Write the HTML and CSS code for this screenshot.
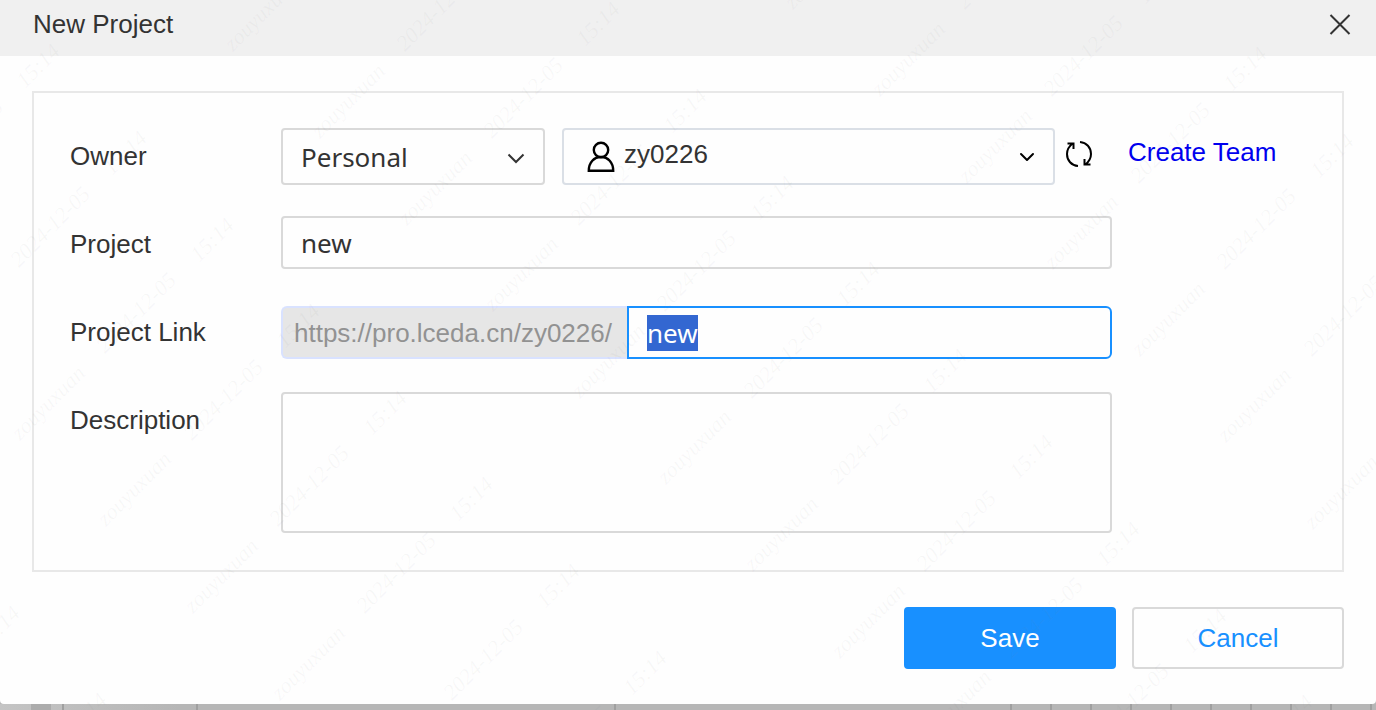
FILE: index.html
```html
<!DOCTYPE html>
<html lang="en">
<head>
<meta charset="utf-8">
<title>New Project</title>
<link rel="stylesheet" href="styles.css">
</head>
<body>
<div class="dialog" role="dialog" aria-labelledby="dialog-title">
  <header class="dialog-header">
    <h1 class="dialog-title" id="dialog-title">New Project</h1>
    <button class="icon-button" type="button" aria-label="Close">
      <svg width="22" height="22" viewBox="0 0 22 22" fill="none" stroke="#333" stroke-width="2"><path d="M1.500 2 20.500 21M20.500 2 1.500 21"/></svg>
    </button>
  </header>
  <form class="dialog-body">
    <div class="panel">
      <label class="label" for="owner-type">Owner</label>
      <div class="owner">
        <div class="select-box owner-type">
          <select class="control select" id="owner-type"><option>Personal</option></select>
          <svg class="chevron" width="18" height="12" viewBox="0 0 18 12" fill="none" stroke="#333" stroke-width="2"><path d="M1.500 2.500 9 10 16.500 2.500"/></svg>
        </div>
        <div class="select-box owner-name">
          <svg class="person" width="30" height="32" viewBox="0 0 30 32" fill="none" stroke="#000" stroke-width="2.400"><circle cx="14" cy="9" r="7.200"/><path d="M1.800 29.700C1.800 21.500 7 16 14 16S26.200 21.500 26.200 29.700Z"/></svg>
          <select class="control select select-name" aria-label="Owner name"><option>zy0226</option></select>
          <svg class="chevron" width="18" height="12" viewBox="0 0 18 12" fill="none" stroke="#000" stroke-width="2" stroke-linecap="round" stroke-linejoin="round"><path d="M3 2 9 8 15 2"/></svg>
        </div>
        <button class="icon-button refresh" type="button" aria-label="Refresh">
          <svg width="26" height="26" viewBox="0 0 26 26" fill="none" stroke="#000" stroke-width="2"><path d="M12 25C5.500 24.500 1 19.500 1 13 1 8.500 3.200 5 7 2.200M1.500 2.500H7.500V8M14 1C20.500 1.500 25 6.500 25 13 25 17.500 22.800 21 19 23.800M24.500 23.500H18.500V18"/></svg>
        </button>
      </div>
      <a class="create-team" href="#">Create Team</a>

      <label class="label" for="project">Project</label>
      <input class="control" id="project" type="text" value="new">

      <label class="label" for="link">Project Link</label>
      <div class="link-group">
        <span class="link-prefix">https://pro.lceda.cn/zy0226/</span>
        <input class="control link-input" id="link" type="text" value="new">
      </div>

      <label class="label" for="description">Description</label>
      <textarea class="control description" id="description"></textarea>
    </div>
    <footer class="actions">
      <button class="button primary" type="submit">Save</button>
      <button class="button" type="button">Cancel</button>
    </footer>
  </form>
</div>
<div class="backdrop"><i class="tab"></i><i></i><i></i><i></i><i></i><i></i><i></i><i></i><i></i><i></i><i></i><i></i><i></i></div>
<svg class="watermark" aria-hidden="true">
  <defs>
    <g id="mark">
      <text transform="translate(8 2) rotate(-45)">zouyuxuan</text>
      <text transform="translate(180 2) rotate(-45)">2024-12-05</text>
      <text transform="translate(360 -3) rotate(-45)">15:14</text>
    </g>
    <g id="run">
      <use href="#mark" x="-348" y="-348"/><use href="#mark" x="-261" y="-261"/>
      <use href="#mark" x="-174" y="-174"/><use href="#mark" x="-87" y="-87"/>
      <use href="#mark"/><use href="#mark" x="87" y="87"/>
      <use href="#mark" x="173" y="173"/><use href="#mark" x="260" y="260"/>
      <use href="#mark" x="346" y="346"/><use href="#mark" x="433" y="433"/>
      <use href="#mark" x="520" y="520"/><use href="#mark" x="606" y="606"/>
    </g>
  </defs>
  <use href="#run" x="-808" y="221"/>
  <use href="#run" x="-248" y="179"/>
  <use href="#run" x="312" y="137"/>
  <use href="#run" x="872" y="95"/>
</svg>
<script src="app.js"></script>
</body>
</html>
```
FILE: styles.css
```css
* { box-sizing: border-box; }

body {
  margin: 0;
  min-height: 100vh;
  display: flex;
  flex-direction: column;
  overflow: hidden;
  background: #b8b8b8;
  color: #333;
  font: 26px/32px "Liberation Sans", Arial, sans-serif;
}

button, input, select, textarea { font: inherit; color: inherit; }

.dialog {
  background: #fefefe;
  border-radius: 0 0 4px 4px;
  overflow: hidden;
}

.dialog-header {
  display: flex;
  justify-content: space-between;
  align-items: center;
  height: 56px;
  padding: 0 25px 8px 33px;
  background: #f0f0f0;
}

.dialog-title { margin: 0; font-size: 26px; font-weight: 400; }

.icon-button {
  display: flex;
  padding: 0;
  border: 0;
  background: none;
}

.dialog-body { padding: 35px 32px; }

.panel {
  display: grid;
  grid-template-columns: 211px 1fr 194px;
  row-gap: 31px;
  align-items: start;
  padding: 35px 36px 37px;
  border: 2px solid #e8e8e8;
}

.label { grid-column: 1; line-height: 57px; }

.control {
  display: block;
  width: 100%;
  height: 53px;
  margin: 0;
  padding: 0 18px;
  border: 2px solid #d9d9d9;
  border-radius: 4px;
  outline: 0;
  background: transparent;
  font-family: "Noto Sans", "Open Sans", sans-serif;
}

.owner { display: flex; align-items: center; }

.select-box { position: relative; }

.select { height: 57px; appearance: none; }

.owner-type { width: 264px; margin-right: 17px; }

.owner-name { flex: 1; margin-right: 11px; }

.select-name {
  padding: 0 60px 6px;
  border-color: #dadfe6;
  font-family: "Liberation Sans", Arial, sans-serif;
}

.chevron {
  position: absolute;
  top: 24px;
  right: 20px;
  pointer-events: none;
}

.owner-name .chevron { right: 19px; }

.person { position: absolute; left: 25px; top: 13px; }

.refresh { margin: 0 20px 5px 0; }

.create-team {
  padding-left: 16px;
  color: #0000ee;
  line-height: 49px;
  text-decoration: none;
}

.link-group {
  display: flex;
  align-self: center;
}

.link-prefix {
  width: 346px;
  padding: 1px 0 0 11px;
  border: 2px solid #d9e2ff;
  border-right: 0;
  border-radius: 6px 0 0 6px;
  background: #e6e6e6;
  color: #929292;
  line-height: 48px;
  white-space: nowrap;
}

.link-input {
  flex: 1;
  width: 0;
  border-color: #1890ff;
  border-radius: 0 6px 6px 0;
}

.link-input::selection { background: #3367d1; color: #fff; }

.description { height: 141px; resize: none; }

.actions {
  display: flex;
  justify-content: flex-end;
  gap: 16px;
  margin-top: 35px;
}

.button {
  width: 212px;
  height: 62px;
  border: 2px solid #d9d9d9;
  border-radius: 4px;
  background: transparent;
  color: #1890ff;
}

.primary { border-color: #1890ff; background: #1890ff; color: #fff; }

/* Strip of the editor's grid below the dialog */
.backdrop {
  flex: 1;
  display: grid;
  grid-template-columns: 64px 134px 418px 1fr repeat(9, 40px);
  padding-right: 4px;
  background: linear-gradient(90deg, #c4c4c4, #b6b6b6 180px);
}

.backdrop i { border-right: 2px solid #a0a0a0; }

.tab { background: linear-gradient(#acacac, #acacac) 31px 0 / 20px 100% no-repeat; }

.watermark {
  position: absolute;
  inset: 0;
  width: 100%;
  height: 100%;
  pointer-events: none;
  fill: #808080;
  fill-opacity: 0.06;
  font: italic 22px "Liberation Serif", "Times New Roman", serif;
}
```
FILE: app.js
```js
const link = document.getElementById("link");
link.focus();
link.select();
```
